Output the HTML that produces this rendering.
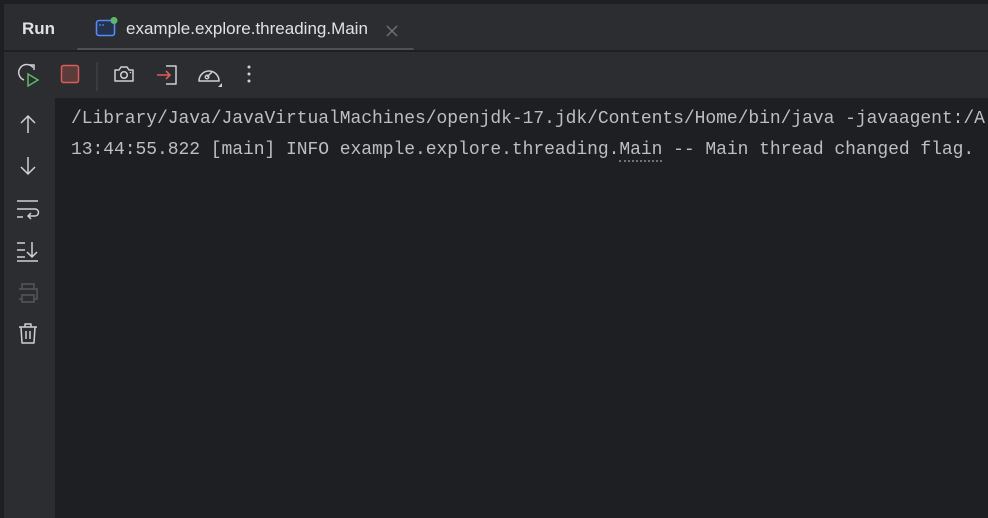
<!DOCTYPE html>
<html><head><meta charset="utf-8"><style>
*{margin:0;padding:0;box-sizing:border-box}
body{width:988px;height:518px;background:#2b2d30;position:relative;overflow:hidden;font-family:"Liberation Sans",sans-serif}
.top{position:absolute;left:0;top:0;width:988px;height:4px;background:#1e1f22}
.sep{position:absolute;left:0;top:50px;width:988px;height:2px;background:#1e1f22}
.run{position:absolute;left:22px;top:19px;font-size:17px;font-weight:bold;color:#dfe1e5}
.tab{position:absolute;left:126px;top:19px;font-size:17px;color:#dfe1e5}
.ul{position:absolute;left:77px;top:48px;width:337px;height:4px;border-radius:2px;background:#4e5157}
.console{position:absolute;left:55px;top:98px;width:933px;height:420px;background:#1e1f22}
.gut{position:absolute;left:0;top:0;width:4px;height:518px;background:#1e1f22}
.line{position:absolute;left:71px;font-family:"Liberation Mono",monospace;font-size:18px;color:#bcbec4;white-space:pre;letter-spacing:-0.05px}
svg{position:absolute}
</style></head><body>
<div class="top"></div>
<div class="gut"></div>
<div class="run">Run</div>
<svg style="left:95px;top:17px" width="24" height="22" viewBox="0 0 24 22"><rect x="1.5" y="3.5" width="18" height="15" rx="2.5" fill="#25324d" stroke="#548af7" stroke-width="1.6"/><line x1="4" y1="8" x2="6" y2="8" stroke="#548af7" stroke-width="1.2"/><line x1="7" y1="8" x2="9" y2="8" stroke="#548af7" stroke-width="1.2"/><circle cx="19" cy="3.5" r="3.5" fill="#5fb865"/></svg>
<div class="tab">example.explore.threading.Main</div>
<svg style="left:385px;top:24px" width="14" height="14"><path d="M2 2L12 12M12 2L2 12" stroke="#6f737a" stroke-width="1.4"/></svg>
<div class="ul"></div>
<div class="sep"></div>
<svg style="left:18px;top:63px" width="24" height="24" viewBox="0 0 24 24"><path d="M15 4.5A8 8 0 1 0 6 17" fill="none" stroke="#ced0d6" stroke-width="1.5"/><path d="M11 2h5v5" fill="none" stroke="#ced0d6" stroke-width="1.5"/><path d="M10 11l10 6l-10 6z" fill="none" stroke="#5fb865" stroke-width="1.5"/></svg>
<svg style="left:60px;top:64px" width="20" height="20"><rect x="1.5" y="1.5" width="17" height="17" rx="2" fill="#5c3b3b" stroke="#db5c5c" stroke-width="1.5"/></svg>
<div style="position:absolute;left:96px;top:62px;width:2px;height:29px;background:#393b40"></div>
<svg style="left:113px;top:64px" width="22" height="20" viewBox="0 0 22 20"><path d="M2 6h4l2-3h6l2 3h4v11H2z" fill="none" stroke="#ced0d6" stroke-width="1.5" stroke-linejoin="round"/><circle cx="11" cy="11" r="3.3" fill="none" stroke="#ced0d6" stroke-width="1.5"/><circle cx="17.5" cy="8.5" r=".8" fill="#ced0d6"/></svg>
<svg style="left:155px;top:63px" width="24" height="24" viewBox="0 0 24 24"><path d="M11 3h10v18H11" fill="none" stroke="#ced0d6" stroke-width="1.5" stroke-linejoin="round"/><path d="M2 12h13M11 8l4 4l-4 4" fill="none" stroke="#db5c5c" stroke-width="1.6"/></svg>
<svg style="left:196px;top:63px" width="28" height="26" viewBox="0 0 28 26"><path d="M3 18A10 10 0 1 1 23 18Z" fill="none" stroke="#ced0d6" stroke-width="1.5" stroke-linejoin="round"/><path d="M11 14l5-5" stroke="#ced0d6" stroke-width="1.5"/><circle cx="11" cy="14" r="1.8" fill="none" stroke="#ced0d6" stroke-width="1.3"/><path d="M26 20v4h-4z" fill="#ced0d6"/></svg>
<svg style="left:246px;top:64px" width="6" height="20"><circle cx="3" cy="3" r="1.5" fill="#ced0d6"/><circle cx="3" cy="10" r="1.5" fill="#ced0d6"/><circle cx="3" cy="17" r="1.5" fill="#ced0d6"/></svg>
<div class="console"></div>
<svg style="left:18px;top:114px" width="20" height="20"><path d="M10 2v17M3 9l7-7l7 7" fill="none" stroke="#ced0d6" stroke-width="1.5"/></svg>
<svg style="left:18px;top:156px" width="20" height="20"><path d="M10 1v17M3 11l7 7l7-7" fill="none" stroke="#ced0d6" stroke-width="1.5"/></svg>
<svg style="left:16px;top:198px" width="24" height="24"><path d="M1 3h21M1 11h11M1 19h6" stroke="#ced0d6" stroke-width="1.5"/><path d="M12 11h7a3 3 0 0 1 0 7h-6M15 15l-3 3l3 3" fill="none" stroke="#ced0d6" stroke-width="1.5"/></svg>
<svg style="left:16px;top:239px" width="24" height="24"><path d="M1 4h8M1 11h8M1 18h8M1 22h21M16 3v15M11 13l5 5l5-5" fill="none" stroke="#ced0d6" stroke-width="1.5"/></svg>
<svg style="left:16px;top:282px" width="24" height="22"><path d="M6 7V2h12v5M3 7h18v10h-3M6 17H3z" fill="none" stroke="#54565b" stroke-width="1.5"/><rect x="6" y="13" width="12" height="7" fill="none" stroke="#54565b" stroke-width="1.5"/></svg>
<svg style="left:17px;top:322px" width="22" height="24"><path d="M2 5h18M8 5V2h6v3M4 5l1 16h12l1-16M9 9v8M13 9v8" fill="none" stroke="#ced0d6" stroke-width="1.5" stroke-linejoin="round"/></svg>
<div class="line" style="top:109px">/Library/Java/JavaVirtualMachines/openjdk-17.jdk/Contents/Home/bin/java -javaagent:/A</div>
<div class="line" style="top:140px">13:44:55.822 [main] INFO example.explore.threading.<span style="border-bottom:2px dotted #6f737a">Main</span> -- Main thread changed flag.</div>
</body></html>
